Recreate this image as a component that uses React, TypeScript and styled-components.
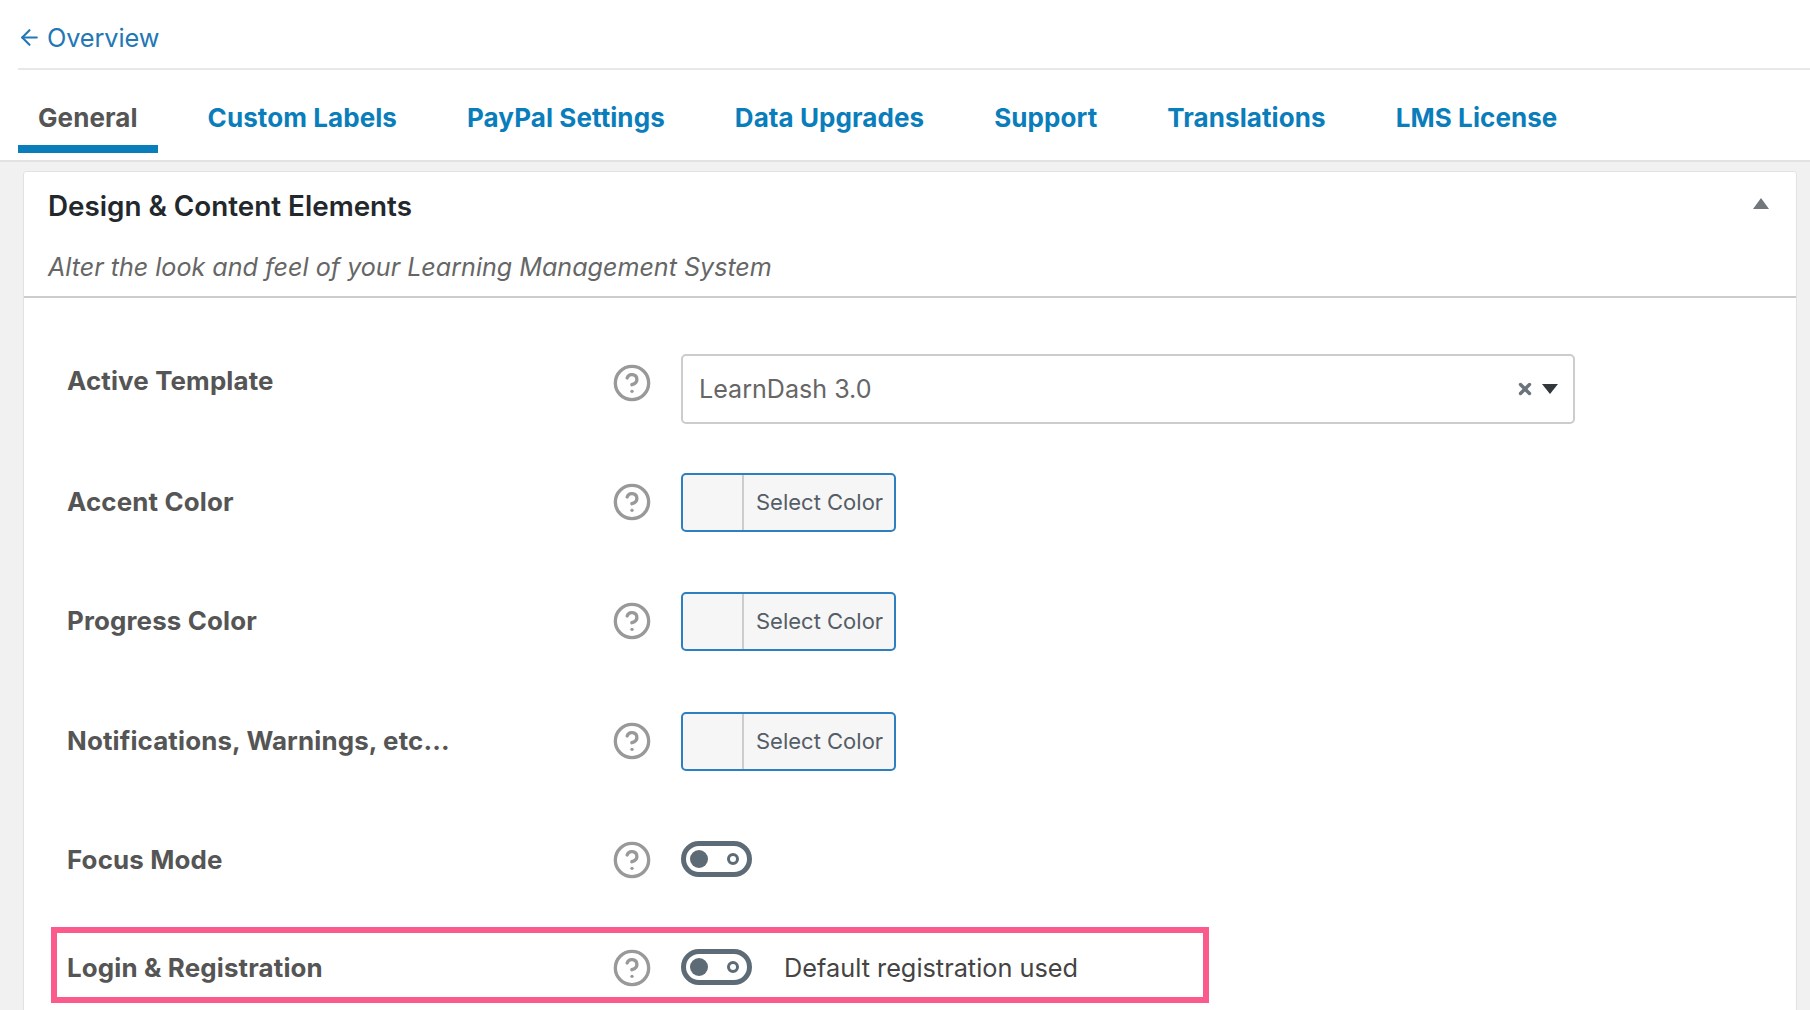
import { createGlobalStyle, styled } from 'styled-components';
import { ArrowLeft, CircleHelp, X } from 'lucide-react';

const GlobalStyle = createGlobalStyle`
  html, body {
    margin: 0;
    height: 100%;
    overflow: hidden;
    background: #f1f1f1;
    font-family: Inter, "Noto Sans", sans-serif;
  }
`;

const Header = styled.header`
  background: #fff;
  height: 160px;
  padding: 0 0 0 18px;
  border-bottom: 2px solid #e2e2e2;
`;

const TopBar = styled.div`
  height: 70px;
  border-bottom: 2px solid #e8e8e8;
  display: flex;
  align-items: center;
  padding-top: 6px;
  box-sizing: border-box;
`;

const BackLink = styled.a`
  display: flex;
  align-items: center;
  gap: 5px;
  margin-left: -1px;
  color: #2277b5;
  font-size: 25.3px;
  letter-spacing: -0.1px;
`;

const TabBar = styled.nav`
  display: flex;
  height: 84px;
  gap: 30px;
`;

const Tab = styled.a<{ $active?: boolean }>`
  height: 83px;
  box-sizing: border-box;
  padding: 32px 20px 0;
  font-size: 26px;
  font-weight: 700;
  letter-spacing: 0.08px;
  color: ${(p) => (p.$active ? '#555' : '#0a7dbb')};
  border-bottom: 8px solid ${(p) => (p.$active ? '#0a7dbb' : 'transparent')};
`;

const Card = styled.section`
  margin: 9px 13px 0 23px;
  background: #fff;
  border: 1px solid #e2e2e2;
  border-radius: 3px;
  height: 900px;
`;

const CardHead = styled.div`
  height: 124px;
  padding: 0 24px;
  border-bottom: 2px solid #ccc;
  position: relative;
`;

const CardTitle = styled.h2`
  margin: 0;
  padding-top: 17px;
  font-size: 27.8px;
  line-height: 34px;
  font-weight: 600;
  color: #23282d;
`;

const CardSubtitle = styled.p`
  margin: 28px 0 0;
  font-size: 25.1px;
  line-height: 32px;
  font-style: italic;
  color: #666;
`;

const Collapse = styled.span`
  position: absolute;
  right: 27px;
  top: 26px;
  width: 0;
  height: 0;
  border-left: 8px solid transparent;
  border-right: 8px solid transparent;
  border-bottom: 11px solid #72777c;
`;

const CardBody = styled.div`
  padding: 0 0 0 43px;
`;

const Row = styled.div<{ $top: number }>`
  display: grid;
  grid-template-columns: 547px 67px 1fr;
  align-items: center;
  height: 62px;
  margin-top: ${(p) => p.$top}px;
  position: relative;
`;

const Highlight = styled.div`
  position: absolute;
  left: -16px;
  top: -9px;
  width: 1158px;
  height: 76px;
  box-sizing: border-box;
  border: 6px solid #fb5a8d;
  pointer-events: none;
`;

const Label = styled.label<{ $shift?: number }>`
  font-size: 25.9px;
  font-weight: 700;
  letter-spacing: 0.15px;
  color: #555;
  margin-top: ${(p) => p.$shift ?? -1}px;
`;

const Help = styled(CircleHelp)<{ $shift?: number }>`
  color: #999;
  margin-left: -2px;
  margin-top: ${(p) => p.$shift ?? 0}px;
`;

const SelectBox = styled.div`
  width: 894px;
  height: 70px;
  margin-top: -1px;
  box-sizing: border-box;
  border: 2px solid #ccc;
  border-radius: 5px;
  padding: 0 16px;
  display: flex;
  align-items: center;
  justify-content: space-between;
  font-size: 25.1px;
  color: #666;
`;

const SelectIcons = styled.span`
  display: flex;
  align-items: center;
  gap: 8px;
  margin-right: -1px;
  color: #6b747c;
`;

const Caret = styled.span`
  width: 0;
  height: 0;
  border-left: 8px solid transparent;
  border-right: 8px solid transparent;
  border-top: 10px solid #32373c;
`;

const ColorButton = styled.button`
  width: 215px;
  height: 59px;
  padding: 0;
  display: flex;
  align-items: center;
  background: #f6f6f6;
  border: 2px solid #2d7fc0;
  border-radius: 5px;
  font-family: inherit;
  font-size: 22px;
  color: #555d66;
`;

const Swatch = styled.span`
  width: 61px;
  height: 100%;
  box-sizing: border-box;
  border-right: 2px solid #ccc;
`;

const ColorText = styled.span`
  padding-left: 12px;
`;

const ToggleWrap = styled.div`
  display: flex;
  align-items: center;
  gap: 32px;
`;

const Toggle = styled.span`
  width: 71px;
  height: 36px;
  box-sizing: border-box;
  border: 5px solid #5d6b76;
  border-radius: 18px;
  padding: 0 8px 0 4px;
  display: flex;
  align-items: center;
  justify-content: space-between;
`;

const ToggleKnob = styled.span`
  width: 18px;
  height: 18px;
  border-radius: 50%;
  background: #5d6b76;
`;

const ToggleDot = styled.span`
  width: 12px;
  height: 12px;
  box-sizing: border-box;
  border-radius: 50%;
  border: 3px solid #5d6b76;
`;

const ToggleNote = styled.span`
  font-size: 25.3px;
  color: #444;
`;

const tabs = ['General', 'Custom Labels', 'PayPal Settings', 'Data Upgrades', 'Support', 'Translations', 'LMS License'];

function ColorRow({ label, top }: { label: string; top: number }) {
  return (
    <Row $top={top}>
      <Label>{label}</Label>
      <Help size={40} strokeWidth={2} />
      <ColorButton>
        <Swatch />
        <ColorText>Select Color</ColorText>
      </ColorButton>
    </Row>
  );
}

export default function App() {
  return (
    <>
      <GlobalStyle />
      <Header>
        <TopBar>
          <BackLink>
            <ArrowLeft size={25} strokeWidth={2} />
            Overview
          </BackLink>
        </TopBar>
        <TabBar>
          {tabs.map((tab, i) => (
            <Tab key={tab} $active={i === 0}>
              {tab}
            </Tab>
          ))}
        </TabBar>
      </Header>
      <Card>
        <CardHead>
          <CardTitle>Design &amp; Content Elements</CardTitle>
          <CardSubtitle>Alter the look and feel of your Learning Management System</CardSubtitle>
          <Collapse />
        </CardHead>
        <CardBody>
          <Row $top={57}>
            <Label $shift={-19}>Active Template</Label>
            <Help size={40} strokeWidth={2} $shift={-14} />
            <SelectBox>
              LearnDash 3.0
              <SelectIcons>
                <X size={18} strokeWidth={4.5} />
                <Caret />
              </SelectIcons>
            </SelectBox>
          </Row>
          <ColorRow label="Accent Color" top={54} />
          <ColorRow label="Progress Color" top={57} />
          <ColorRow label="Notifications, Warnings, etc..." top={58} />
          <Row $top={56}>
            <Label $shift={1}>Focus Mode</Label>
            <Help size={40} strokeWidth={2} $shift={2} />
            <Toggle>
              <ToggleKnob />
              <ToggleDot />
            </Toggle>
          </Row>
          <Row $top={46}>
            <Highlight />
            <Label $shift={1}>Login &amp; Registration</Label>
            <Help size={40} strokeWidth={2} $shift={2} />
            <ToggleWrap>
              <Toggle>
                <ToggleKnob />
                <ToggleDot />
              </Toggle>
              <ToggleNote>Default registration used</ToggleNote>
            </ToggleWrap>
          </Row>
        </CardBody>
      </Card>
    </>
  );
}
